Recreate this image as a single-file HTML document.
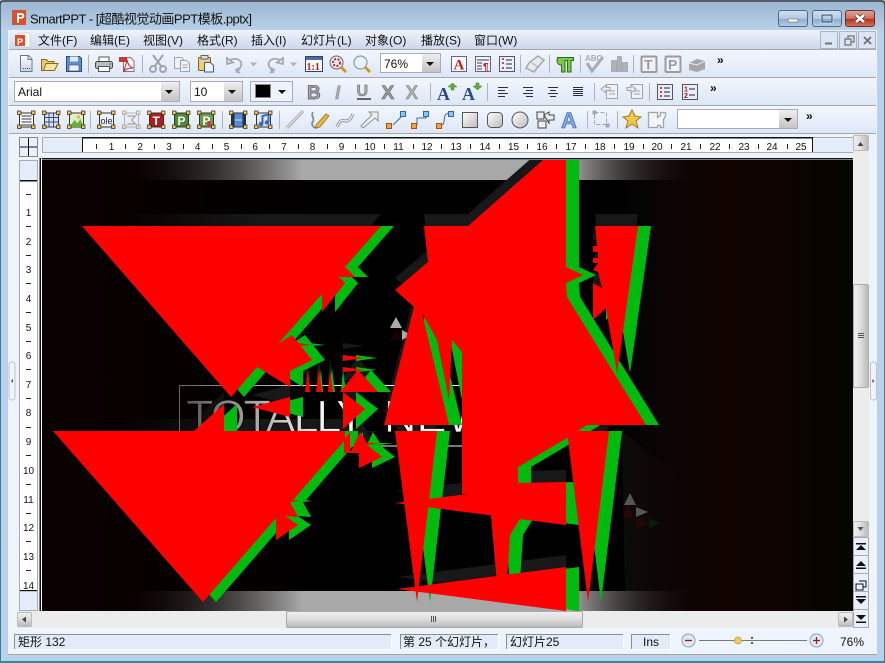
<!DOCTYPE html>
<html><head><meta charset="utf-8"><title>SmartPPT</title>
<style>
html,body{margin:0;padding:0;background:#b9d1ea;width:885px;height:663px;overflow:hidden}
svg{display:block;position:absolute;left:0;top:0}
text{font-family:"Liberation Sans","Noto Sans CJK SC",sans-serif;fill:#111}
.m{font-size:12px}
.r{font-size:10px;text-anchor:middle}
</style></head><body>
<svg width="885" height="663" viewBox="0 0 885 663" xmlns="http://www.w3.org/2000/svg">
<defs>
<linearGradient id="tb" x1="0" y1="0" x2="0" y2="1"><stop offset="0" stop-color="#98b3cf"/><stop offset="1" stop-color="#b9d1ea"/></linearGradient>
<linearGradient id="menu" x1="0" y1="0" x2="0" y2="1"><stop offset="0" stop-color="#eef3fb"/><stop offset="1" stop-color="#cdd8ec"/></linearGradient>
<linearGradient id="bar" x1="0" y1="0" x2="0" y2="1"><stop offset="0" stop-color="#f3f7fe"/><stop offset="1" stop-color="#dde7f6"/></linearGradient>
<linearGradient id="btn" x1="0" y1="0" x2="0" y2="1"><stop offset="0" stop-color="#d0dff0"/><stop offset=".5" stop-color="#b3c9e2"/><stop offset=".55" stop-color="#8eacce"/><stop offset="1" stop-color="#b8cfe6"/></linearGradient>
<linearGradient id="cl" x1="0" y1="0" x2="0" y2="1"><stop offset="0" stop-color="#dfa69a"/><stop offset=".5" stop-color="#cc6e5c"/><stop offset=".55" stop-color="#b8321c"/><stop offset="1" stop-color="#d4775f"/></linearGradient>
<linearGradient id="cb" x1="0" y1="0" x2="0" y2="1"><stop offset="0" stop-color="#eee"/><stop offset="1" stop-color="#c4c4c4"/></linearGradient>
<linearGradient id="th" x1="0" y1="0" x2="0" y2="1"><stop offset="0" stop-color="#f0f0f0"/><stop offset=".5" stop-color="#dcdcdc"/><stop offset="1" stop-color="#b8b8b8"/></linearGradient>
<linearGradient id="thv" x1="0" y1="0" x2="1" y2="0"><stop offset="0" stop-color="#f0f0f0"/><stop offset=".5" stop-color="#dcdcdc"/><stop offset="1" stop-color="#b8b8b8"/></linearGradient>
<linearGradient id="sl" gradientUnits="userSpaceOnUse" x1="42" y1="0" x2="853" y2="0"><stop offset="0" stop-color="#0b0000"/><stop offset=".28" stop-color="#030000"/><stop offset=".35" stop-color="#000"/><stop offset=".71" stop-color="#000"/><stop offset=".76" stop-color="#0a0505"/><stop offset=".83" stop-color="#100300"/><stop offset=".92" stop-color="#0d0300"/><stop offset="1" stop-color="#060500"/></linearGradient>
<linearGradient id="bandg" gradientUnits="userSpaceOnUse" x1="42" y1="0" x2="853" y2="0"><stop offset=".09" stop-color="#0b0000" stop-opacity="0"/><stop offset=".32" stop-color="#a8a8a8"/><stop offset=".65" stop-color="#a8a8a8"/><stop offset=".81" stop-color="#100300" stop-opacity="0"/></linearGradient>
<linearGradient id="sh" gradientUnits="userSpaceOnUse" x1="120" y1="0" x2="260" y2="0"><stop offset="0" stop-color="#161616" stop-opacity="0"/><stop offset="1" stop-color="#181818"/></linearGradient>
<linearGradient id="tx" gradientUnits="userSpaceOnUse" x1="185" y1="0" x2="330" y2="0"><stop offset="0" stop-color="#555"/><stop offset=".5" stop-color="#aaa"/><stop offset="1" stop-color="#fff"/></linearGradient>
<linearGradient id="ln" gradientUnits="userSpaceOnUse" x1="180" y1="0" x2="340" y2="0"><stop offset="0" stop-color="#666"/><stop offset="1" stop-color="#eee"/></linearGradient>
<linearGradient id="lt" gradientUnits="userSpaceOnUse" x1="622" y1="0" x2="700" y2="0"><stop offset="0" stop-color="#100c0c"/><stop offset="1" stop-color="#100300" stop-opacity="0"/></linearGradient>
<linearGradient id="doc" x1="0" y1="0" x2="0" y2="1"><stop offset="0" stop-color="#fff"/><stop offset="1" stop-color="#c8d2e4"/></linearGradient>
<linearGradient id="shape" x1="0" y1="0" x2="1" y2="1"><stop offset="0" stop-color="#fff"/><stop offset="1" stop-color="#bbb"/></linearGradient>
<g id="hd"><rect x="0" y="0" width="3.5" height="3.5" fill="#f3cb4d" stroke="#222" stroke-width=".7"/><rect x="14" y="0" width="3.5" height="3.5" fill="#f3cb4d" stroke="#222" stroke-width=".7"/><rect x="0" y="14" width="3.5" height="3.5" fill="#f3cb4d" stroke="#222" stroke-width=".7"/><rect x="14" y="14" width="3.5" height="3.5" fill="#f3cb4d" stroke="#222" stroke-width=".7"/></g>
<g id="shapes">
<polygon points="82,226 381,226 345,267 355,277 339,277 345,283 322,312 322,294 278,344 292,335 312,360 290,371 290,387 257,367 231,397"/>
<polygon points="53,431 194,431 224,404 224,431 345,431 345,440 293,500 299,501 290,502 298,517 285,516 298,525 276,540 276,518 203,602"/>
<polygon points="297,343 312,345 297,346"/>
<polygon points="252,407 290,397 290,417"/>
<polygon points="343,392 365,409 343,429"/>
<polygon points="305,392 308,370 310,392"/>
<polygon points="316,392 319,368 322,392"/>
<polygon points="328,392 330,370 333,392"/>
<polygon points="343,355 364,358 343,361"/>
<polygon points="343,367 364,370 343,372"/>
<polygon points="340,392 358,370 378,392"/>
<polygon points="344,440 350,432 350,453 344,453"/>
<polygon points="360,432 367,443 380,443 367,445 382,457 359,468 359,453 350,453"/>
<polygon points="424,226 468,226 543,160 566,160 566,267 583,275 566,283 567,297 646,425 587,425 567,438 518,467 518,483 566,482 566,525 520,519 510,535 506,595 498,595 491,516 470,494 462,494 462,352 452,340 449,400 437,340 422,313 449,425 384,425 414,307 395,290 428,262"/>
<polygon points="595,226 638,226 617,373 606,308 593,320 593,283 602,288 598,272 593,270 598,263 593,263 593,258 598,258 598,252 593,252 593,246 597,246"/>
<polygon points="395,503 566,482 566,525"/>
<polygon points="395,431 437,431 417,602"/>
<polygon points="567,431 609,431 588,602"/>
<polygon points="397,589 566,567 566,611"/>
</g>
<clipPath id="slc"><rect x="42" y="160" width="811" height="451"/></clipPath>
</defs>

<!-- window frame -->
<rect width="885" height="663" fill="#b9d1ea"/>
<rect width="885" height="30" fill="url(#tb)"/>
<path d="M0 30V5Q0 1 4 1H881Q885 1 885 5V30" fill="none" stroke="#3c4248" stroke-width="1.4"/>
<path d="M.5 30V661" stroke="#3a7e95" stroke-width="1"/><path d="M884.5 30V661" stroke="#3a7e95" stroke-width="1"/>
<rect x="0" y="661" width="885" height="2" fill="#2f8ba3"/>
<rect x="8" y="30" width="869" height="625" fill="#eef4fc"/>
<rect x="8" y="654" width="869" height="1" fill="#a5a5a5"/>

<!-- title -->
<rect x="12" y="10" width="14" height="15" fill="#d8512a"/>
<path d="M17 13h4.5a2.7 2.7 0 0 1 0 5.600H19v4h-2z" fill="#fff"/><path d="M19 15v2h2.200a1 1 0 0 0 0-2z" fill="#d8512a"/>
<text x="30" y="23.500" font-size="13" textLength="222" lengthAdjust="spacing">SmartPPT - [超酷视觉动画PPT模板.pptx]</text>

<rect x="778.500" y="10.500" width="29" height="16" rx="2.500" fill="url(#btn)" stroke="#4a6a88"/>
<rect x="788" y="19" width="10" height="3" rx="1" fill="#fff" stroke="#555" stroke-width=".6"/>
<rect x="812.500" y="10.500" width="29" height="16" rx="2.500" fill="url(#btn)" stroke="#4a6a88"/>
<rect x="822" y="15" width="10" height="7" fill="none" stroke="#33465a" stroke-width="1"/><rect x="821" y="14" width="12" height="9" fill="none" stroke="#fff" stroke-width=".5"/>
<rect x="845.500" y="10.500" width="29" height="16" rx="2.500" fill="url(#cl)" stroke="#6a3028"/>
<path d="M856 15l8 7M864 15l-8 7" stroke="#4a2a20" stroke-width="4"/><path d="M856 15l8 7M864 15l-8 7" stroke="#fff" stroke-width="2.600"/>

<!-- menu -->
<rect x="9" y="30" width="867" height="19" fill="url(#menu)"/>
<rect x="19" y="33" width="11" height="14" fill="#fff" stroke="#c4c4c4" stroke-width=".6"/>
<rect x="15" y="35" width="10" height="11" fill="#d8512a"/><text x="17" y="45" font-size="9" style="fill:#fff" font-weight="bold">P</text>
<g class="m">
<text class="m" x="38" y="44.500">文件(F)</text>
<text class="m" x="90" y="44.500">编辑(E)</text>
<text class="m" x="143" y="44.500">视图(V)</text>
<text class="m" x="197" y="44.500">格式(R)</text>
<text class="m" x="251" y="44.500">插入(I)</text>
<text class="m" x="301" y="44.500">幻灯片(L)</text>
<text class="m" x="365" y="44.500">对象(O)</text>
<text class="m" x="421" y="44.500">播放(S)</text>
<text class="m" x="474" y="44.500">窗口(W)</text>
</g>
<g fill="#dbe5f3" stroke="#a8b4c4">
<rect x="820.500" y="31.500" width="17" height="17"/><rect x="839.500" y="31.500" width="17" height="17"/><rect x="858.500" y="31.500" width="17" height="17"/></g>
<path d="M825 43.500h7" stroke="#707070" stroke-width="2"/>
<path d="M845 39h6v6h-6zM848 39v-3h6v6h-3" fill="none" stroke="#707070" stroke-width="1.200"/>
<path d="M864 37l7 7M871 37l-7 7" stroke="#707070" stroke-width="1.800"/>

<!-- toolbars -->
<rect x="9" y="49" width="867" height="28" fill="url(#bar)"/>
<rect x="9" y="77" width="867" height="28" fill="url(#bar)"/>
<rect x="9" y="105" width="867" height="28" fill="url(#bar)"/>
<g fill="#a8a8a8"><rect x="9" y="49" width="867" height="1"/><rect x="9" y="77" width="867" height="1"/><rect x="9" y="105" width="867" height="1"/><rect x="9" y="133" width="867" height="1"/></g>
<rect x="9" y="134" width="867" height="27" fill="#edf3fb"/>

<!-- seps -->
<g fill="#b0b4ba">
<rect x="88" y="55" width="1" height="18"/><rect x="142" y="55" width="1" height="18"/><rect x="520" y="55" width="1" height="18"/><rect x="549" y="55" width="1" height="18"/><rect x="580" y="55" width="1" height="18"/><rect x="633" y="55" width="1" height="18"/>
<rect x="430" y="83" width="1" height="18"/><rect x="487" y="83" width="1" height="18"/><rect x="594" y="83" width="1" height="18"/><rect x="649" y="83" width="1" height="18"/>
<rect x="90" y="111" width="1" height="18"/><rect x="222" y="111" width="1" height="18"/><rect x="279" y="111" width="1" height="18"/><rect x="587" y="111" width="1" height="18"/><rect x="617" y="111" width="1" height="18"/>
</g>

<!-- row 1 icons -->
<path d="M20.500 55.500h8l3.500 3.500v12.500h-11.500z" fill="url(#doc)" stroke="#6a7890"/><path d="M28 55.500v4h4" fill="none" stroke="#6a7890"/><path d="M23 68.500h7" stroke="#445" stroke-dasharray="1 1"/>
<path d="M41.500 59.500h5l1.500 2h6v9h-12.500z" fill="#e8c878" stroke="#8a6a20"/><path d="M43.500 70.500l2.500-7h12l-3.500 7z" fill="#fbe29b" stroke="#8a6a20"/>
<path d="M66.500 56.500h13l2 2v13h-15z" fill="#5d8ed0" stroke="#2c4a80"/><rect x="70" y="56.500" width="8" height="5" fill="#dfe8f5"/><rect x="69" y="65" width="10" height="6" fill="#eef" stroke="#2c4a80" stroke-width=".6"/>
<rect x="99" y="57" width="10" height="5" fill="#fff" stroke="#555"/><rect x="95.500" y="61.500" width="17" height="7" rx="2" fill="#b8bcc4" stroke="#444"/><rect x="98.500" y="66.500" width="11" height="5" fill="#fff" stroke="#555"/><circle cx="110" cy="64" r=".9" fill="#3a3"/>
<path d="M123.500 57.500h7l3.500 3.500v10.500h-10.500z" fill="#f4f6fa" stroke="#777"/><rect x="119" y="57" width="8" height="5" fill="#c33"/><path d="M124 71c2-8 3-9 3-11 1 5 3 7 6 8-4 0-7 1-9 3z" fill="none" stroke="#c22" stroke-width="1"/>
<g fill="none" stroke="#a0a4aa" stroke-width="2"><circle cx="153" cy="69" r="3"/><circle cx="163" cy="69" r="3"/><path d="M155 66l8-11M161 66l-8-11"/></g>
<g fill="#eef1f5" stroke="#a0a4aa"><path d="M174.500 57.500h7l2 2v9h-9z"/><path d="M180.500 60.500h6l3 3v8h-9z"/></g><path d="M182.500 65h5M182.500 67.500h5" stroke="#a0a4aa"/>
<rect x="198.500" y="57.500" width="12" height="13" rx="1" fill="#eecf7f" stroke="#7a6020"/><rect x="201" y="55.500" width="7" height="3.500" fill="#dde" stroke="#666"/><path d="M204.500 62.500h6l3 3v6.500h-9z" fill="#eef2fb" stroke="#3a5a90"/>
<g fill="none" stroke="#a5a8ad" stroke-width="1.800"><path d="M227 58l0 6 6-1.500zM230 60c6-3 13 0 11 6-1 3-4 4-4 7"/><path d="M240 73l-4-3 3-2"/><path d="M283 58l0 6-6-1.500zM280 60c-6-3-13 0-11 6 1 3 4 4 4 7"/><path d="M270 73l4-3-3-2"/></g>
<path d="M250 62.500h7l-3.500 4zM290 62.500h7l-3.500 4z" fill="#b0b4ba"/>
<rect x="305.500" y="56.500" width="17" height="15" fill="#fff" stroke="#3c3c70"/><rect x="306" y="57" width="16" height="3" fill="#4a6ea8"/><text x="306.500" y="70" font-size="10" font-weight="bold" style="font-family:'Liberation Serif',serif;fill:#c01010">1:1</text>
<circle cx="336.500" cy="62.500" r="6.500" fill="#e8eaf0" stroke="#666"/><circle cx="336.500" cy="62.500" r="3.500" fill="none" stroke="#b23" stroke-width="2" stroke-dasharray="2 1.500"/><path d="M341 67l5 5" stroke="#d4952c" stroke-width="3"/>
<circle cx="360.500" cy="62.500" r="6.500" fill="#e4f2fb" stroke="#7a8a9a"/><path d="M365 67l5 5" stroke="#d4952c" stroke-width="3"/>
<rect x="380.500" y="53.500" width="60" height="19" fill="#fff" stroke="#aab"/><rect x="422" y="54" width="18" height="18" fill="url(#cb)"/><path d="M426 62h8l-4 4z" fill="#111"/>
<text x="384" y="68" font-size="12">76%</text>
<rect x="451.500" y="56.500" width="15" height="15" fill="#fff" stroke="#667"/><text x="453.500" y="69.500" font-size="15" font-weight="bold" style="font-family:'Liberation Serif',serif;fill:#c81818">A</text>
<rect x="475.500" y="56.500" width="15" height="15" fill="#f4f6fc" stroke="#667"/><path d="M477 60h12" stroke="#334" stroke-width="1"/><path d="M477 63h5M477 66h5M477 69h5" stroke="#335" stroke-width="1"/><text x="483" y="70" font-size="10" font-weight="bold" style="fill:#c01818">¶</text>
<rect x="499.500" y="56.500" width="15" height="15" fill="#eef1fa" stroke="#556"/><path d="M502 59h2M502 63h2M502 68h2" stroke="#b11" stroke-width="1.500"/><path d="M506 60h6M506 64h6M506 68h6" stroke="#224" stroke-width="1"/>
<path d="M538 56l6 4-7 8-3 4-8-4 3-5z" fill="#e8eaec" stroke="#a4a8ac" stroke-width="1.500"/><path d="M532 63l6 4" stroke="#a4a8ac"/>
<path d="M557.500 57.500h16v3h-2.500v11.500h-3.500v-11.500h-2.500v11.500h-3.500v-7c-3 0-4.500-2-4.500-4.500z" fill="#7cc84a" stroke="#2a6a1a"/>
<text x="585" y="61" font-size="8" font-weight="bold" style="fill:#a8acb0">ABC</text><path d="M587 63l5 8 11-14" fill="none" stroke="#a8acb0" stroke-width="3"/>
<g fill="#b0b2b6" stroke="#909296" stroke-width=".6"><rect x="611.500" y="60.500" width="5" height="11"/><rect x="617.500" y="56.500" width="4" height="15"/><rect x="622.500" y="62.500" width="5" height="9"/></g>
<g fill="#f0f2f6" stroke="#9a9ca0" stroke-width="2"><rect x="641.500" y="56.500" width="15" height="15.500" rx="1"/><rect x="665.500" y="56.500" width="15" height="15.500" rx="1"/></g>
<text x="644" y="69.500" font-size="14" font-weight="bold" style="fill:#9a9ca0">T</text><text x="668" y="69.500" font-size="14" font-weight="bold" style="fill:#9a9ca0">P</text>
<path d="M689 63l8-4 8 2v8l-8 3-8-2z" fill="#a4a6aa"/><path d="M689 63l8 2 8-4" fill="none" stroke="#e8eaee"/>
<text x="717" y="64" font-size="12" font-weight="bold">»</text>

<!-- row 2 -->
<rect x="14.500" y="81.500" width="165" height="20" fill="#fff" stroke="#aab"/><rect x="161" y="82" width="18" height="19" fill="url(#cb)"/><path d="M165 90h8l-4 4z" fill="#111"/>
<text x="18" y="96" font-size="12">Arial</text>
<rect x="190.500" y="81.500" width="52" height="20" fill="#fff" stroke="#aab"/><rect x="224" y="82" width="18" height="19" fill="url(#cb)"/><path d="M228 90h8l-4 4z" fill="#111"/>
<text x="194" y="96" font-size="12">10</text>
<rect x="250.500" y="81.500" width="42" height="20" fill="#eef2f9" stroke="#aab"/><rect x="255.500" y="84.500" width="15" height="13" fill="#000" stroke="#888"/><path d="M278 90h8l-4 4z" fill="#111"/>
<text x="307" y="99" font-size="19" font-weight="bold" style="fill:#a8a8a8;stroke:#555;stroke-width:.7">B</text>
<text x="335" y="99" font-size="19" font-weight="bold" font-style="italic" style="fill:#a8a8a8;stroke:#777;stroke-width:.3">I</text>
<text x="356.500" y="96" font-size="16" font-weight="bold" style="fill:#a8a8a8;stroke:#666;stroke-width:.5">U</text><rect x="357" y="98" width="14" height="2" fill="#666"/>
<text x="381.500" y="99" font-size="19" font-weight="bold" style="fill:#999;stroke:#666;stroke-width:.6">X</text>
<text x="405.500" y="99" font-size="19" font-weight="bold" style="fill:#aaa;stroke:#888;stroke-width:.4">X</text>
<text x="437" y="100" font-size="18" font-weight="bold" style="font-family:'Liberation Serif',serif;fill:#2a4a90">A</text><path d="M451 90v-3h-3l4.500-4 4.500 4h-3v3z" fill="#5cb030" stroke="#2a6a1a" stroke-width=".4"/>
<text x="462" y="100" font-size="18" font-weight="bold" style="font-family:'Liberation Serif',serif;fill:#2a4a90">A</text><path d="M476 83v3h-3l4.500 4 4.500-4h-3v-3z" fill="#5cb030" stroke="#2a6a1a" stroke-width=".4"/>
<g stroke="#2c2c44" stroke-width="1">
<path d="M498 87.500h10M498 90.500h7M498 93.500h10M498 96.500h7"/>
<path d="M523 87.500h10M526 90.500h7M523 93.500h10M526 96.500h7"/>
<path d="M548 87.500h10M550 90.500h6M548 93.500h10M550 96.500h6"/>
<path d="M573 87.500h10M573 89.500h10M573 91.500h10M573 93.500h10M573 95.500h10"/>
</g>
<g fill="#eef2f8" stroke="#a0a4a8"><rect x="606.500" y="84.500" width="11" height="14"/><rect x="631.500" y="84.500" width="11" height="14"/></g>
<path d="M601 89l5-4v2.500h4v3h-4V93z" fill="#e8ecf2" stroke="#a0a4a8"/><path d="M636 89l-5-4v2.500h-4v3h4V93z" fill="#e8ecf2" stroke="#a0a4a8"/>
<path d="M609 91h6M609 94h6M634 91h6M634 94h6" stroke="#a0a4a8"/>
<rect x="657.500" y="84.500" width="15" height="15" fill="#e8ecf6" stroke="#556"/><path d="M660 88h2M660 92h2M660 96h2" stroke="#b11" stroke-width="1.600"/><path d="M664 88h6M664 92h6M664 96h6" stroke="#224" stroke-width="1"/>
<rect x="682.500" y="84.500" width="15" height="15" fill="#e8ecf6" stroke="#556"/><text x="684" y="91.500" font-size="7" font-weight="bold" style="fill:#b11">1</text><text x="684" y="98" font-size="7" font-weight="bold" style="fill:#b11">2</text><path d="M689 89h6M689 95h6" stroke="#224" stroke-width="1"/>
<text x="710" y="92" font-size="12" font-weight="bold">»</text>

<!-- row 3 -->
<g transform="translate(17.500,111)"><rect x="2" y="2" width="14" height="14" fill="#fff" stroke="#333"/><path d="M4 5h10M4 8h10M4 11h10M4 14h10" stroke="#334" stroke-width="1"/><use href="#hd"/></g>
<g transform="translate(42.500,111)"><rect x="2" y="2" width="14" height="14" fill="#d8e2f4" stroke="#334"/><path d="M2 6.500h14M2 11h14M6.500 2v14M11 2v14" stroke="#3a4a80"/><use href="#hd"/></g>
<g transform="translate(67.500,111)"><rect x="2" y="2" width="14" height="14" fill="#dff0c8" stroke="#333"/><path d="M2 16l5-7 3 3 3-4 3 8z" fill="#6cae3a"/><circle cx="11" cy="6" r="1.700" fill="#e8b83a"/><use href="#hd"/></g>
<g transform="translate(97.500,111)"><rect x="2" y="2" width="14" height="14" fill="#eef2fa" stroke="#334"/><text x="3" y="13" font-size="9" style="fill:#223">ole</text><use href="#hd"/></g>
<g transform="translate(122.500,111)" opacity=".4"><rect x="2" y="2" width="14" height="14" fill="#eee" stroke="#666"/><path d="M5 5h8l-4 4 4 4H5" fill="none" stroke="#555" stroke-width="1.400"/><use href="#hd"/></g>
<g transform="translate(147.500,111)"><rect x="2" y="2" width="14" height="14" fill="#b01c1c" stroke="#333"/><text x="5" y="14" font-size="12" font-weight="bold" style="fill:#fff">T</text><use href="#hd"/></g>
<g transform="translate(172.500,111)"><rect x="2" y="2" width="14" height="14" fill="#4e8a34" stroke="#333"/><text x="5" y="14" font-size="12" font-weight="bold" style="fill:#fff">P</text><use href="#hd"/></g>
<g transform="translate(197.500,111)"><rect x="2" y="2" width="14" height="14" fill="#6a9a4a" stroke="#333"/><text x="5" y="14" font-size="12" font-weight="bold" style="fill:#fff">P</text><rect x="10" y="10" width="3" height="6" fill="#c33"/><use href="#hd"/></g>
<g transform="translate(229.500,111)"><rect x="2" y="2" width="14" height="14" fill="#5b8ad0" stroke="#234"/><rect x="2" y="2" width="3" height="14" fill="#234"/><rect x="13" y="2" width="3" height="14" fill="#234"/><path d="M5 9h8" stroke="#cde"/><use href="#hd"/></g>
<g transform="translate(254.500,111)"><rect x="2" y="2" width="14" height="14" fill="#dfe6f2" stroke="#334"/><path d="M8 13V5l6-1.500v8" fill="none" stroke="#3a6ac0" stroke-width="2"/><circle cx="6.500" cy="13" r="2.300" fill="#3a6ac0"/><circle cx="12.500" cy="11.500" r="2.300" fill="#3a6ac0"/><use href="#hd"/></g>
<path d="M287 128l16-17" stroke="#a0a2a6" stroke-width="3"/><path d="M287 128l16-17" stroke="#f0f0f0" stroke-width="1"/>
<path d="M313 112c-3 4 3 7-1 11 0 3 2 5 5 5" fill="none" stroke="#8a8c90" stroke-width="1.800"/><path d="M316 125l10-11 3 2-9 11-5 1z" fill="#eeb43c" stroke="#8a6a1a" stroke-width=".7"/>
<path d="M337 127c4-9 6-6 9-6s5-2 7-7" fill="none" stroke="#8a8c90" stroke-width="3"/><path d="M337 127c4-9 6-6 9-6s5-2 7-7" fill="none" stroke="#f4f4f4" stroke-width="1.200"/>
<path d="M363 128l-2-2 11-11-3-3h9v9l-3-3z" fill="#f0f0f0" stroke="#909296"/>
<path d="M393 125l13-13M417 125v-7h9v-5M441 125c6 0 0-11 8-12" fill="none" stroke="#3a6aa0"/>
<rect x="386.500" y="123.500" width="5" height="5" fill="#f2a050" stroke="#a05a10"/><rect x="400.500" y="111.500" width="5" height="5" fill="#8ec4f0" stroke="#2a6aa0"/>
<rect x="411.500" y="123.500" width="5" height="5" fill="#f2a050" stroke="#a05a10"/><rect x="423.500" y="111.500" width="5" height="5" fill="#8ec4f0" stroke="#2a6aa0"/>
<rect x="436.500" y="123.500" width="5" height="5" fill="#f2a050" stroke="#a05a10"/><rect x="448.500" y="111.500" width="5" height="5" fill="#8ec4f0" stroke="#2a6aa0"/>
<rect x="462.500" y="112.500" width="15" height="15" fill="url(#shape)" stroke="#555"/>
<rect x="487.500" y="112.500" width="15" height="15" rx="4" fill="url(#shape)" stroke="#555"/>
<circle cx="520" cy="120" r="8" fill="url(#shape)" stroke="#555"/>
<path d="M537 112h7v7h-7zM544 115l5-3v3h5l0 5h-5v3z" fill="#eee" stroke="#444"/><rect x="538" y="121" width="8" height="7" fill="#eee" stroke="#444"/>
<text x="561" y="128" font-size="22" font-weight="bold" style="fill:#7ca8e4;stroke:#3a5aa0;stroke-width:.6">A</text>
<g fill="none" stroke="#a4a6aa"><rect x="594.500" y="112.500" width="12" height="12" stroke-dasharray="4 2"/><rect x="593" y="111" width="3" height="3" fill="#a4a6aa"/><rect x="606" y="124" width="3" height="3" fill="#a4a6aa"/></g>
<path d="M632 110l3 6 6 1-5 4 2 7-6-4-6 4 2-7-5-4 6-1z" fill="#f4c84a" stroke="#a07a1a"/>
<path d="M648.500 112.500h9v5l3-2v-3h5v4l-2 3v8h-3v-2h-3v2h-9z" fill="#f2f4f8" stroke="#a4a6aa" stroke-width="1.300"/>
<rect x="677.500" y="109.500" width="120" height="19" fill="#fff" stroke="#aab"/><rect x="779" y="110" width="18" height="18" fill="url(#cb)"/><path d="M784 118h8l-4 4z" fill="#111"/>
<text x="806" y="120" font-size="12" font-weight="bold">»</text>

<!-- ruler corner -->
<rect x="19.500" y="137.500" width="18" height="19" fill="#eaf0fa" stroke="#888"/><path d="M20 147h17M28.500 138v18" stroke="#111"/>

<!-- h ruler -->
<rect x="42.500" y="137.500" width="811" height="15" fill="#e4edf9" stroke="#a8aab0"/>
<rect x="82" y="138" width="731" height="14" fill="#fff"/>
<rect x="82" y="137" width="731" height="1.500" fill="#111"/><rect x="82" y="138" width="1" height="14" fill="#111"/><rect x="812" y="138" width="1" height="14" fill="#111"/>
<rect x="42" y="158" width="811" height="1.500" fill="#111"/>
<g>
<text class="r" x="111.500" y="150">1</text><text class="r" x="140.200" y="150">2</text><text class="r" x="169" y="150">3</text><text class="r" x="197.700" y="150">4</text><text class="r" x="226.500" y="150">5</text><text class="r" x="255.200" y="150">6</text><text class="r" x="284" y="150">7</text><text class="r" x="312.500" y="150">8</text><text class="r" x="341.500" y="150">9</text><text class="r" x="370" y="150">10</text><text class="r" x="398.500" y="150">11</text><text class="r" x="427" y="150">12</text><text class="r" x="456" y="150">13</text><text class="r" x="485" y="150">14</text><text class="r" x="513.500" y="150">15</text><text class="r" x="542" y="150">16</text><text class="r" x="571" y="150">17</text><text class="r" x="600" y="150">18</text><text class="r" x="629" y="150">19</text><text class="r" x="657" y="150">20</text><text class="r" x="686" y="150">21</text><text class="r" x="715" y="150">22</text><text class="r" x="744" y="150">23</text><text class="r" x="772" y="150">24</text><text class="r" x="801" y="150">25</text>
</g>
<path d="M96.500 144v5M125.500 144v5M154.500 144v5M183.500 144v5M212.500 144v5M241.500 144v5M269.500 144v5M298.500 144v5M327.500 144v5M355.500 144v5M384.500 144v5M413.500 144v5M441.500 144v5M470.500 144v5M499.500 144v5M527.500 144v5M556.500 144v5M585.500 144v5M614.500 144v5M643.500 144v5M671.500 144v5M700.500 144v5M729.500 144v5M758.500 144v5M787.500 144v5" stroke="#222"/>

<!-- v ruler -->
<rect x="19.500" y="160.500" width="18" height="450" fill="#e4edf9" stroke="#a8aab0"/>
<rect x="20" y="180" width="17" height="411" fill="#fff"/>
<rect x="20" y="180" width="17" height="1.500" fill="#111"/>
<rect x="20" y="590" width="17" height="1.200" fill="#111"/>
<rect x="39.500" y="158" width="1.500" height="453" fill="#111"/>
<g>
<text class="r" x="28.500" y="216">1</text><text class="r" x="28.500" y="245">2</text><text class="r" x="28.500" y="273">3</text><text class="r" x="28.500" y="302">4</text><text class="r" x="28.500" y="331">5</text><text class="r" x="28.500" y="359">6</text><text class="r" x="28.500" y="388">7</text><text class="r" x="28.500" y="416">8</text><text class="r" x="28.500" y="445">9</text><text class="r" x="28.500" y="474">10</text><text class="r" x="28.500" y="503">11</text><text class="r" x="28.500" y="531">12</text><text class="r" x="28.500" y="560">13</text><text class="r" x="28.500" y="589">14</text>
</g>
<path d="M26 194.500h5M26 226.500h5M26 255.500h5M26 283.500h5M26 312.500h5M26 341.500h5M26 369.500h5M26 398.500h5M26 427.500h5M26 455.500h5M26 484.500h5M26 513.500h5M26 541.500h5M26 570.500h5" stroke="#222"/>

<!-- slide -->
<rect x="41" y="160" width="812" height="451" fill="#fff"/>
<g clip-path="url(#slc)">
<rect x="42" y="160" width="811" height="451" fill="url(#sl)"/>
<rect x="42" y="160" width="811" height="20" fill="url(#bandg)"/>
<rect x="42" y="591" width="811" height="20" fill="url(#bandg)"/>
<polygon points="622,431 700,495 700,591 625,591" fill="url(#lt)"/>
<use href="#shapes" y="-12" fill="url(#sh)"/>
<rect x="179.500" y="385.500" width="283" height="60.500" fill="none" stroke="url(#ln)"/>
<text x="186" y="432" font-size="45" textLength="180" lengthAdjust="spacing" style="fill:url(#tx);stroke:#000;stroke-width:.7">TOTALLY</text>
<text x="384" y="432" font-size="45" textLength="105" lengthAdjust="spacing" style="fill:#f4f6fa;stroke:#000;stroke-width:.7">NEW</text>
<polygon points="396,317 390,328 402,328" fill="#aaa"/><polygon points="402,330 411,335 402,340" fill="#aaa"/><polygon points="396,330 390,340 402,340" fill="#1a0000"/>
<polygon points="630,493 624,505 636,505" fill="#555"/><polygon points="636,507 648,512 636,517" fill="#555"/><polygon points="628,507 623,517 634,517" fill="#2c0606"/><polygon points="636,518 648,523 636,528" fill="#2c0606"/><polygon points="649,518 660,523 649,528" fill="#0c1c0c"/>
<use href="#shapes" x="13" fill="#00bb0e"/>
<use href="#shapes" fill="#ff0000"/>
</g>

<!-- h scrollbar -->
<rect x="17" y="611" width="836" height="17" fill="#ececec"/>
<rect x="17.500" y="612.500" width="14" height="14" rx="1.500" fill="url(#th)" stroke="#bbb"/><path d="M26 616.500v6l-4-3z" fill="#444"/>
<rect x="286.500" y="611.500" width="296" height="16" rx="1.500" fill="url(#th)" stroke="#aaa"/>
<path d="M431.500 616v6M433.500 616v6M435.500 616v6" stroke="#555"/>
<rect x="838.500" y="612.500" width="14" height="14" rx="1.500" fill="url(#th)" stroke="#bbb"/><path d="M844 616.500v6l4-3z" fill="#444"/>

<!-- v scrollbar -->
<rect x="853" y="134" width="16" height="403" fill="#ececec"/>
<rect x="853.500" y="135.500" width="15" height="15" rx="1.500" fill="url(#thv)" stroke="#bbb"/><path d="M857.500 146h6l-3-4z" fill="#444"/>
<rect x="853.500" y="284.500" width="15" height="103" rx="1.500" fill="url(#thv)" stroke="#aaa"/>
<path d="M858 333.500h6M858 335.500h6M858 337.500h6" stroke="#555"/>
<rect x="853.500" y="521.500" width="15" height="15" rx="1.500" fill="url(#thv)" stroke="#bbb"/><path d="M857.500 527h6l-3 4z" fill="#555"/>
<g fill="#eaf0fa" stroke="#a8aab0"><rect x="853.500" y="537.500" width="15" height="18"/><rect x="853.500" y="555.500" width="15" height="18"/><rect x="853.500" y="573.500" width="15" height="18"/><rect x="853.500" y="591.500" width="15" height="18"/><rect x="853.500" y="609.500" width="15" height="18"/></g>
<path d="M856 543h10v1.500h-10zM861 545l5 5h-10z" fill="#111"/>
<path d="M861 561l5 5h-10zM856 567.500h10v1.500h-10z" fill="#111"/>
<path d="M856 584h7v6h-7zM859 581h7v6h-3" fill="#eef" stroke="#111" stroke-width="1"/>
<path d="M856 596h10v1.500h-10zM856 599h10l-5 5z" fill="#111"/>
<path d="M856 615h10l-5 5zM856 621.500h10v1.500h-10z" fill="#111"/>

<!-- side grips -->
<rect x="9" y="362" width="6" height="38" rx="2.500" fill="#f0f4fa" stroke="#a8b0bc" stroke-width=".7"/><path d="M13 379v4l-2-2z" fill="#445"/>
<rect x="870.500" y="362" width="6" height="38" rx="2.500" fill="#f0f4fa" stroke="#a8b0bc" stroke-width=".7"/><path d="M872.500 379v4l2-2z" fill="#445"/>

<!-- status bar -->
<g fill="#e2ebf9"><rect x="14" y="634" width="377" height="15"/><rect x="400" y="634" width="98" height="15"/><rect x="506" y="634" width="117" height="15"/><rect x="631" y="634" width="39" height="15"/></g>
<g fill="none" stroke="#8e8e8e"><path d="M14.500 649V634.500H391"/><path d="M400.500 649V634.500H498"/><path d="M506.500 649V634.500H623"/><path d="M631.500 649V634.500H670"/></g>
<g fill="none" stroke="#fff"><path d="M391.500 634V649.500H14"/><path d="M498.500 634V649.500H400"/><path d="M623.500 634V649.500H506"/><path d="M670.500 634V649.500H631"/></g>
<text x="18" y="646" font-size="12">矩形 132</text>
<text x="403" y="646" font-size="12">第 25 个幻灯片，</text>
<text x="510" y="646" font-size="12">幻灯片25</text>
<text x="643" y="646" font-size="12">Ins</text>
<circle cx="688.500" cy="640.500" r="6.500" fill="#dce8f6" stroke="#8ea4c0"/><path d="M685 640.500h7" stroke="#a01818" stroke-width="1.300"/>
<circle cx="816.500" cy="640.500" r="6.500" fill="#dce8f6" stroke="#8ea4c0"/><path d="M813 640.500h7M816.500 637v7" stroke="#a01818" stroke-width="1.300"/>
<rect x="699" y="640" width="108" height="1" fill="#777"/>
<path d="M752 637v2M752 642v2" stroke="#555" stroke-width="2"/>
<circle cx="738" cy="640.500" r="3.500" fill="#f4c860" stroke="#c49a3a" stroke-width=".7"/>
<text x="840" y="646" font-size="12">76%</text>
</svg>
</body></html>
